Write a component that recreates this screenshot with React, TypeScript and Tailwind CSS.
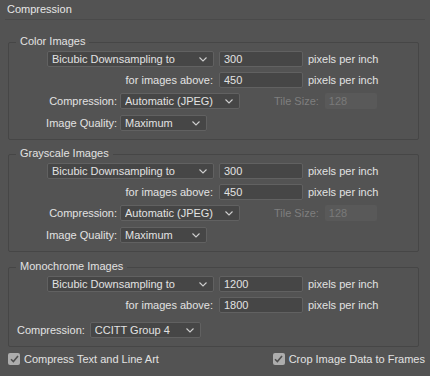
import React from 'react';

const Chevron = () => (
  <svg width="8" height="5" viewBox="0 0 8 5" className="shrink-0">
    <polyline points="0.5,0.5 4,4 7.5,0.5" fill="none" stroke="#cfcfcf" strokeWidth="1.1" />
  </svg>
);

const Select = ({ value, width }: { value: string; width: string }) => (
  <div className={`${width} h-4 flex items-center justify-between pl-[4px] pr-[6px] bg-[#464646] border border-[#616161] rounded-[2px] text-[#e2e2e2]`}>
    <span className="leading-none truncate">{value}</span>
    <Chevron />
  </div>
);

const Input = ({ value }: { value: string }) => (
  <div className="w-[84px] h-4 flex items-center pl-[4px] bg-[#464646] border border-[#616161] rounded-[2px] text-[#e2e2e2]">
    <span className="leading-none">{value}</span>
  </div>
);

const Checkbox = ({ label }: { label: string }) => (
  <div className="flex items-center gap-[4px]">
    <div className="w-3 h-3 rounded-[2px] bg-[#adadad] flex items-center justify-center">
      <svg width="9" height="8" viewBox="0 0 9 8">
        <polyline points="1,4.2 3.4,6.6 8,1" fill="none" stroke="#4f4f4f" strokeWidth="1.6" />
      </svg>
    </div>
    <span className="text-[#e2e2e2] leading-none">{label}</span>
  </div>
);

const Group = ({ title, className = '', children }: { title: string; className?: string; children: React.ReactNode }) => (
  <div className={`relative ml-2 mr-[11px] border border-[#464646] rounded-[2px] pt-[8px] pb-[8px] ${className}`}>
    <span className="absolute left-[7px] -top-[7px] px-[4px] bg-[#535353] text-[#e2e2e2] leading-none">{title}</span>
    <div className="flex flex-col gap-[5px]">{children}</div>
  </div>
);

const DownsampleRows = ({ ppi, above }: { ppi: string; above: string }) => (
  <>
    <div className="flex items-center h-4 pl-[38px] gap-[5px]">
      <Select value="Bicubic Downsampling to" width="w-[167px]" />
      <Input value={ppi} />
      <span className="text-[#e2e2e2] leading-none">pixels per inch</span>
    </div>
    <div className="flex items-center h-4 pl-[38px] gap-[5px]">
      <span className="w-[167px] text-right pr-[1px] text-[#e2e2e2] leading-none">for images above:</span>
      <Input value={above} />
      <span className="text-[#e2e2e2] leading-none">pixels per inch</span>
    </div>
  </>
);

const JpegRows = () => (
  <>
    <div className="flex items-center h-4">
      <span className="w-[108px] text-right text-[#e2e2e2] leading-none">Compression:</span>
      <div className="ml-[3px]">
        <Select value="Automatic (JPEG)" width="w-[120px]" />
      </div>
      <span className="ml-[34px] text-[#7f7f7f] leading-none">Tile Size:</span>
      <div className="ml-[6px] w-[52px] h-4 flex items-center pl-[4px] bg-[#595959] rounded-[2px] text-[#7a7a7a]">
        <span className="leading-none">128</span>
      </div>
    </div>
    <div className="flex items-center h-4 mt-[1px]">
      <span className="w-[108px] text-right text-[#e2e2e2] leading-none">Image Quality:</span>
      <div className="ml-[3px]">
        <Select value="Maximum" width="w-[87px]" />
      </div>
    </div>
  </>
);

export default function App() {
  return (
    <div
      className="w-[430px] h-[376px] bg-[#535353] text-[11px] overflow-hidden"
      style={{ fontFamily: '"Liberation Sans", Arial, sans-serif' }}
    >
      <div className="h-5 mx-[5px] border-b border-[#4a4a4a] flex items-center">
        <span className="pl-[2px] text-[#e6e6e6] leading-none">Compression</span>
      </div>

      <div className="mt-[22px] flex flex-col gap-[14px]">
        <Group title="Color Images">
          <DownsampleRows ppi="300" above="450" />
          <JpegRows />
        </Group>

        <Group title="Grayscale Images">
          <DownsampleRows ppi="300" above="450" />
          <JpegRows />
        </Group>

        <Group title="Monochrome Images" className="mt-[1px]">
          <DownsampleRows ppi="1200" above="1800" />
          <div className="flex items-center h-4 pl-[8px] gap-[5px] mt-[4px]">
            <span className="text-[#e2e2e2] leading-none">Compression:</span>
            <Select value="CCITT Group 4" width="w-[111px]" />
          </div>
        </Group>
      </div>

      <div className="mt-[6px] flex items-center justify-between pl-2 pr-[5px] h-3">
        <Checkbox label="Compress Text and Line Art" />
        <Checkbox label="Crop Image Data to Frames" />
      </div>
    </div>
  );
}
